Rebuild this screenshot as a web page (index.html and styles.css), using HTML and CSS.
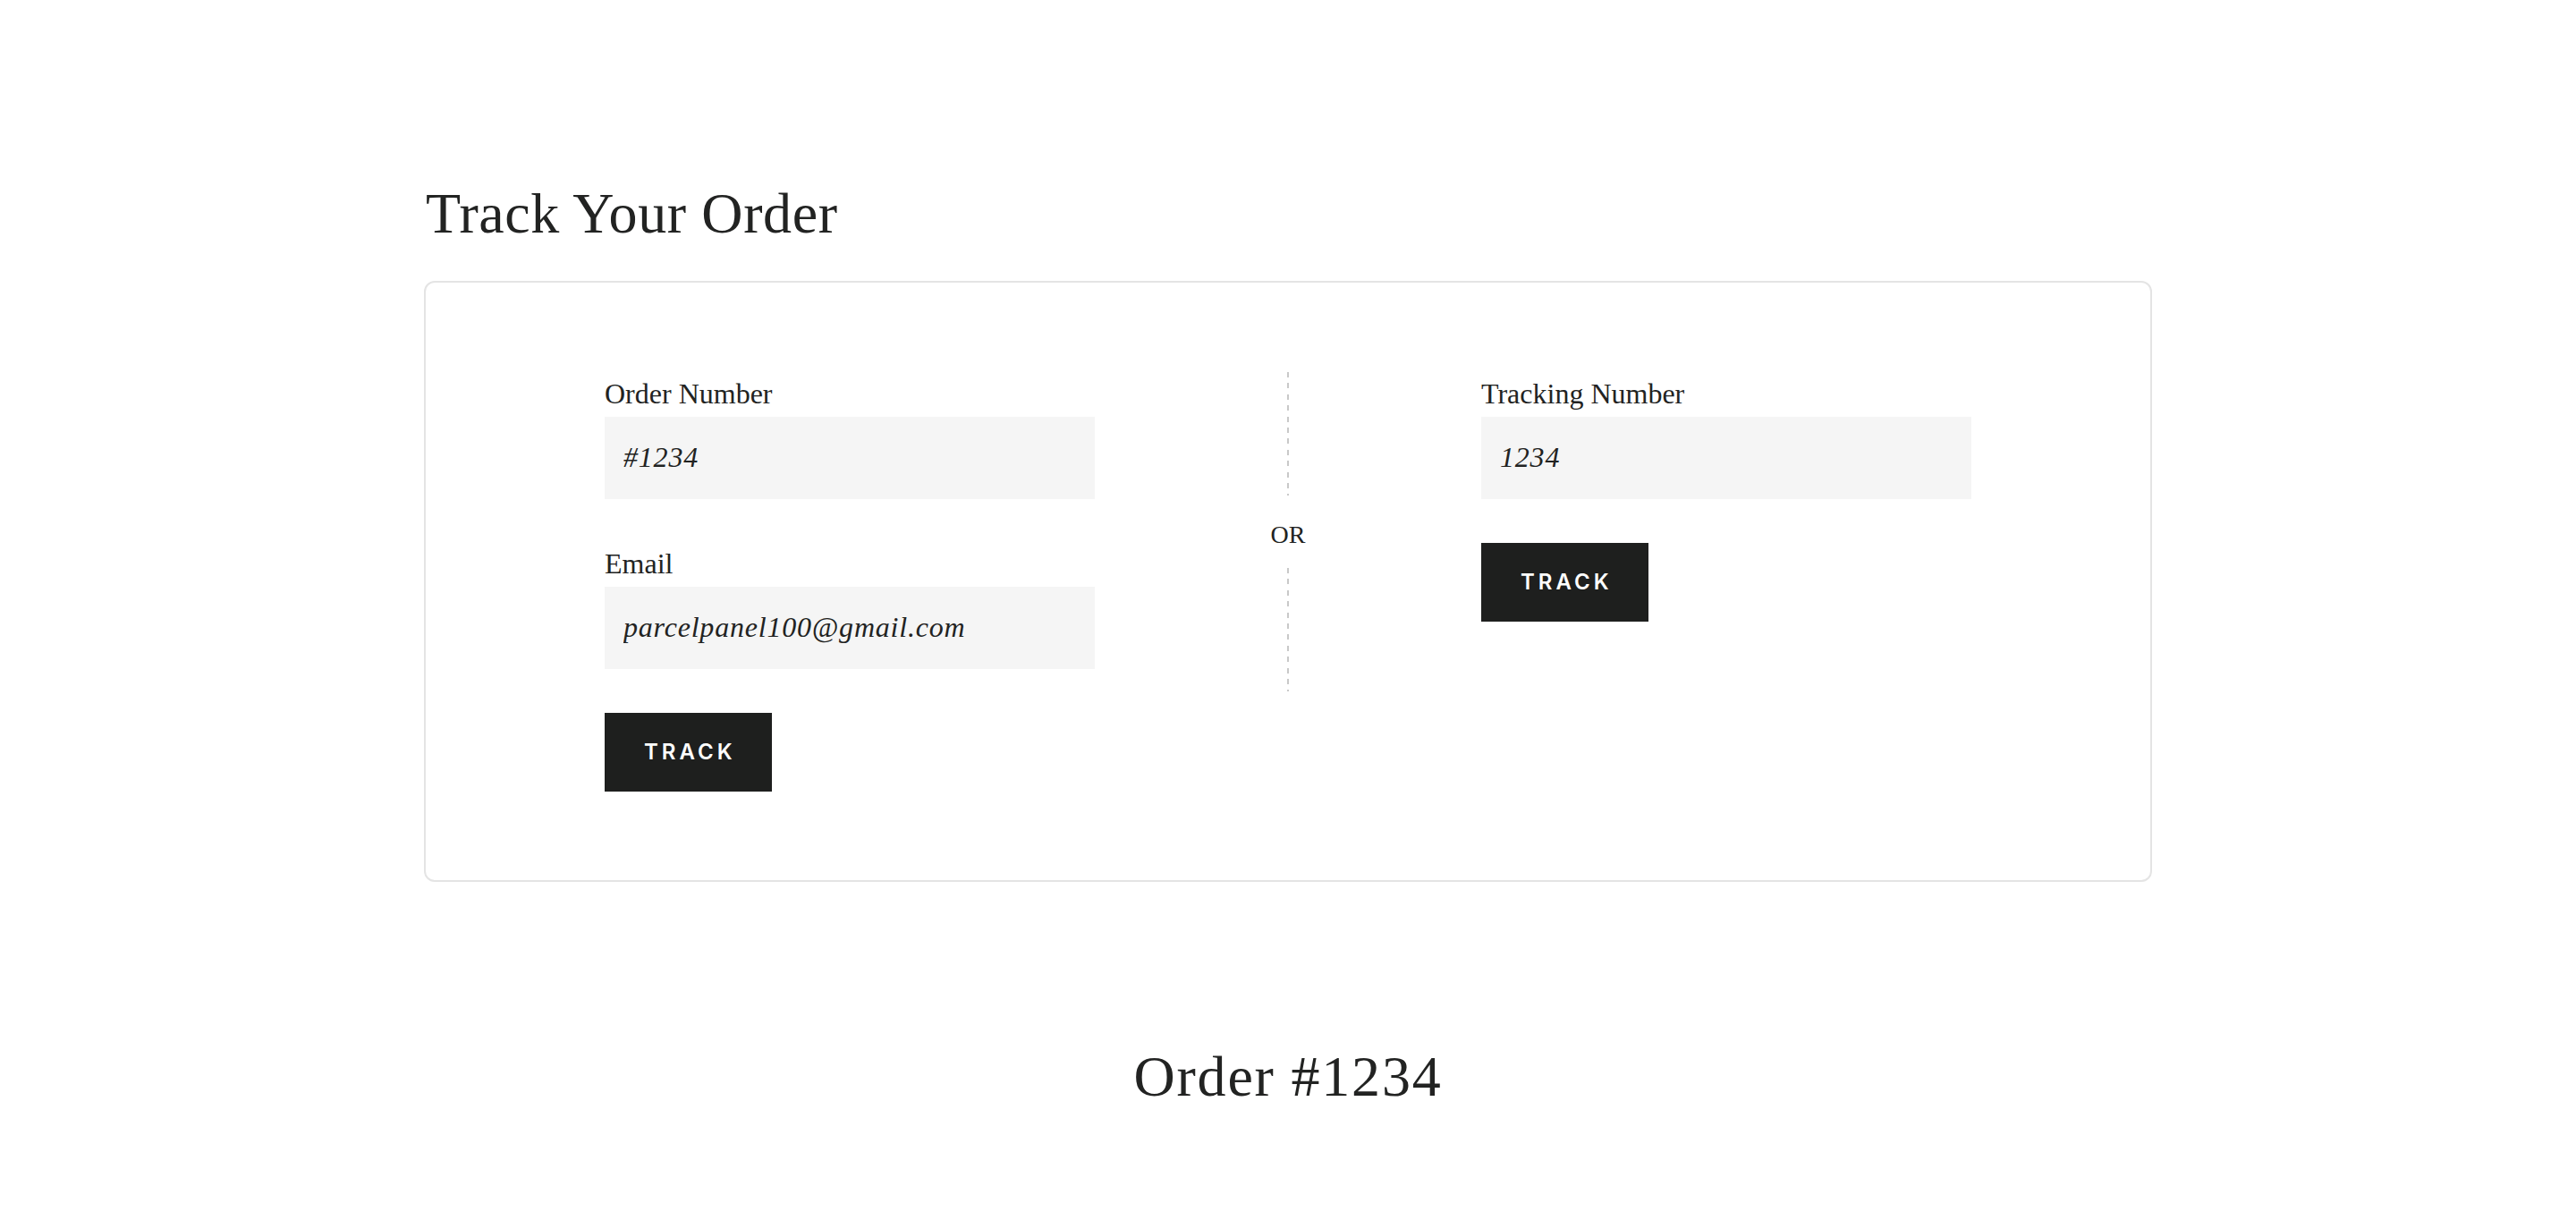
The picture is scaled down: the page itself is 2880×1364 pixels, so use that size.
FILE: index.html
```html
<!DOCTYPE html>
<html lang="en">
<head>
<meta charset="utf-8">
<title>Track Your Order</title>
<link rel="stylesheet" href="styles.css">
</head>
<body>
<main class="page">
  <h1 class="page-title">Track Your Order</h1>
  <section class="track-card">
    <form class="track-form">
      <div class="field">
        <label class="field-label" for="order">Order Number</label>
        <input class="field-input" id="order" type="text" value="#1234">
      </div>
      <div class="field">
        <label class="field-label" for="email">Email</label>
        <input class="field-input" id="email" type="text" value="parcelpanel100@gmail.com">
      </div>
      <button class="track-btn" type="button">TRACK</button>
    </form>
    <div class="divider">
      <span class="divider-line"></span>
      <span class="divider-text">OR</span>
      <span class="divider-line"></span>
    </div>
    <form class="track-form">
      <div class="field">
        <label class="field-label" for="tracking">Tracking Number</label>
        <input class="field-input" id="tracking" type="text" value="1234">
      </div>
      <button class="track-btn" type="button">TRACK</button>
    </form>
  </section>
  <h2 class="order-title">Order #1234</h2>
</main>
</body>
</html>
```

FILE: styles.css
```css
* { box-sizing: border-box; }

html, body {
  margin: 0;
  padding: 0;
  background: #ffffff;
}

body {
  font-family: "Liberation Serif", "Times New Roman", serif;
  color: #222322;
}

.page {
  width: 1932px;
  margin: 0 auto;
  padding-top: 201px;
}

.page-title {
  margin: 0 0 36px 2px;
  font-weight: 400;
  font-size: 64px;
  line-height: 1.2;
  letter-spacing: 0.6px;
  color: #222322;
}

.track-card {
  display: grid;
  grid-template-columns: 1fr 432px 1fr;
  align-items: start;
  border: 2px solid #e4e4e4;
  border-radius: 12px;
  padding: 100px 200px 99px;
}

.track-form {
  display: flex;
  flex-direction: column;
  align-items: flex-start;
  padding-top: 4px;
}

.field {
  width: 100%;
  margin-bottom: 49px;
}

.field + .field { margin-top: 3px; }

.field-label {
  display: block;
  font-size: 32px;
  line-height: 40px;
  margin-bottom: 6px;
  color: #222322;
}

.field-input {
  display: block;
  width: 100%;
  height: 92px;
  border: 0;
  outline: none;
  background: #f5f5f5;
  padding: 0 0 0 21px;
  font-family: "Liberation Serif", "Times New Roman", serif;
  font-style: italic;
  font-size: 32px;
  letter-spacing: 0.8px;
  color: #222322;
}

.track-btn {
  height: 88px;
  padding: 0 40px 0 44px;
  border: 0;
  background: #1e1f1e;
  color: #ffffff;
  font-family: Inter, "Liberation Sans", sans-serif;
  font-weight: 600;
  font-size: 24px;
  letter-spacing: 4px;
  cursor: pointer;
}

.divider {
  display: flex;
  flex-direction: column;
  align-items: center;
}

.divider-line {
  display: block;
  width: 2px;
  height: 138px;
  background: repeating-linear-gradient(to bottom, #c9c9c9 0 6px, transparent 6px 12.4px);
}

.divider-text {
  font-size: 28px;
  line-height: 40px;
  margin: 24px 0 17px;
  color: #222322;
}

.order-title {
  margin: 180px 0 0;
  text-align: center;
  font-weight: 400;
  font-size: 64px;
  line-height: 1.2;
  letter-spacing: 1.8px;
  color: #222322;
}
```
